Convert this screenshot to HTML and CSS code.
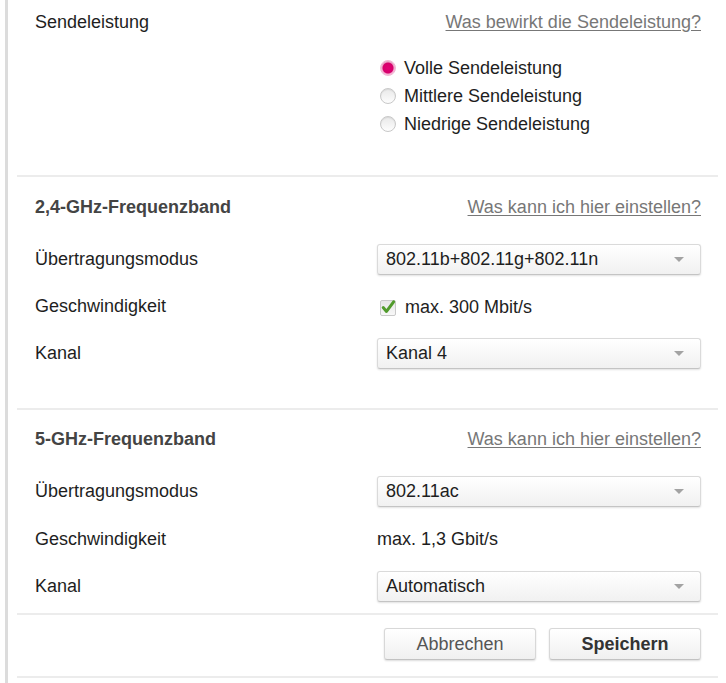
FILE: index.html
```html
<!DOCTYPE html>
<html lang="de">
<head>
<meta charset="utf-8">
<title>WLAN-Einstellungen</title>
<link rel="stylesheet" href="styles.css">
</head>
<body>
<div class="frame">
  <section class="section s-power">
    <div class="row head">
      <div class="label">Sendeleistung</div>
      <a class="help" href="#">Was bewirkt die Sendeleistung?</a>
    </div>
    <div class="radios">
      <div class="radio-row"><span class="radio checked"></span><span>Volle Sendeleistung</span></div>
      <div class="radio-row"><span class="radio"></span><span>Mittlere Sendeleistung</span></div>
      <div class="radio-row"><span class="radio"></span><span>Niedrige Sendeleistung</span></div>
    </div>
  </section>

  <section class="section s-24">
    <div class="row head">
      <div class="title">2,4-GHz-Frequenzband</div>
      <a class="help" href="#">Was kann ich hier einstellen?</a>
    </div>
    <div class="rows">
      <div class="row field">
        <div class="label">Übertragungsmodus</div>
        <div class="select"><span>802.11b+802.11g+802.11n</span><span class="arrow"></span></div>
      </div>
      <div class="row field">
        <div class="label">Geschwindigkeit</div>
        <div class="check-row">
          <span class="checkbox"><svg viewBox="0 0 16 16" width="16" height="16"><path d="M3.2 7.6 L6.5 11.4 L13.6 1.8" fill="none" stroke="#519b2c" stroke-width="3" stroke-linecap="round" stroke-linejoin="round"/></svg></span>
          <span>max. 300 Mbit/s</span>
        </div>
      </div>
      <div class="row field">
        <div class="label">Kanal</div>
        <div class="select"><span>Kanal 4</span><span class="arrow"></span></div>
      </div>
    </div>
  </section>

  <section class="section s-5">
    <div class="row head">
      <div class="title">5-GHz-Frequenzband</div>
      <a class="help" href="#">Was kann ich hier einstellen?</a>
    </div>
    <div class="rows">
      <div class="row field">
        <div class="label">Übertragungsmodus</div>
        <div class="select"><span>802.11ac</span><span class="arrow"></span></div>
      </div>
      <div class="row field">
        <div class="label">Geschwindigkeit</div>
        <div class="value">max. 1,3 Gbit/s</div>
      </div>
      <div class="row field">
        <div class="label">Kanal</div>
        <div class="select"><span>Automatisch</span><span class="arrow"></span></div>
      </div>
    </div>
  </section>

  <section class="section s-actions">
    <button class="btn" type="button">Abbrechen</button>
    <button class="btn primary" type="button">Speichern</button>
  </section>
</div>
</body>
</html>
```

FILE: styles.css
```css
* { box-sizing: border-box; }

html, body {
  margin: 0;
  padding: 0;
  background: #fff;
}

body {
  font-family: "Liberation Sans", Arial, sans-serif;
  font-size: 18px;
  color: #1e1e1e;
}

.frame {
  margin-left: 5px;
  border-left: 3px solid #dcdcdc;
  padding-left: 9px;
  padding-right: 8px;
  min-height: 683px;
}

.section {
  border-bottom: 2px solid #ececec;
  padding-left: 18px;
  padding-right: 17px;
}

.row {
  display: grid;
  grid-template-columns: 342px 1fr;
  align-items: center;
}

.head {
  height: 30px;
  grid-template-columns: 1fr auto;
}

.title {
  font-weight: bold;
  color: #444;
}

.help {
  color: #777;
  text-decoration: underline;
  text-underline-offset: 2px;
}

/* Section 1 */
.s-power {
  padding-top: 7px;
  padding-bottom: 37px;
}

.radios {
  margin-top: 17px;
  margin-left: 345px;
  display: flex;
  flex-direction: column;
}

.radio-row {
  height: 28px;
  display: flex;
  align-items: center;
  gap: 8px;
}

.radio {
  width: 16px;
  height: 16px;
  border-radius: 50%;
  border: 1px solid #c8c8c8;
  background: linear-gradient(#e9e9e9, #fdfdfd);
  box-shadow: inset 0 1px 1px rgba(0,0,0,0.08);
  flex: none;
}

.radio.checked {
  border-color: #f0b6d3;
  background: radial-gradient(circle, #e20074 0, #d6006c 5px, #f3a3cb 6px, #fbe0ee 8px);
}

/* Rows */
.rows {
  display: flex;
  flex-direction: column;
  gap: 16px;
}

.field {
  height: 31px;
}

.s-24 {
  padding-top: 15px;
  padding-bottom: 39px;
}

.s-24 .rows { margin-top: 22px; }

.s-5 {
  padding-top: 14px;
  padding-bottom: 11px;
}

.s-5 .rows { margin-top: 22px; gap: 16.5px; }

.select {
  height: 31px;
  display: flex;
  align-items: center;
  justify-content: space-between;
  padding: 0 16px 0 8px;
  border: 1px solid #dadada;
  border-bottom-color: #c4c4c4;
  border-radius: 3px;
  background: linear-gradient(#ffffff, #f1f1f1);
  box-shadow: 0 1px 2px rgba(0,0,0,0.12);
  color: #1e1e1e;
}

.arrow {
  width: 0;
  height: 0;
  border-left: 5px solid transparent;
  border-right: 5px solid transparent;
  border-top: 5px solid #a3a3a3;
}

.check-row {
  display: flex;
  align-items: center;
  gap: 9px;
  padding-left: 3px;
  padding-top: 2px;
}

.checkbox {
  width: 16px;
  height: 16px;
  border: 1px solid #c9c9c9;
  border-radius: 2px;
  background: linear-gradient(#e6e6e6, #f8f8f8);
  display: flex;
  align-items: center;
  justify-content: center;
  flex: none;
  overflow: visible;
}

.checkbox svg { display: block; overflow: visible; }

/* Actions */
.s-actions {
  display: flex;
  justify-content: flex-end;
  gap: 13px;
  padding-top: 13px;
  padding-bottom: 16px;
}

.btn {
  width: 152px;
  height: 32px;
  font-family: inherit;
  font-size: 18px;
  color: #555;
  border: 1px solid #d8d8d8;
  border-bottom-color: #c2c2c2;
  border-radius: 3px;
  background: linear-gradient(#ffffff, #f0f0f0);
  box-shadow: 0 1px 2px rgba(0,0,0,0.14);
  padding: 0;
  cursor: pointer;
}

.btn.primary {
  font-weight: bold;
  color: #333;
}
```
